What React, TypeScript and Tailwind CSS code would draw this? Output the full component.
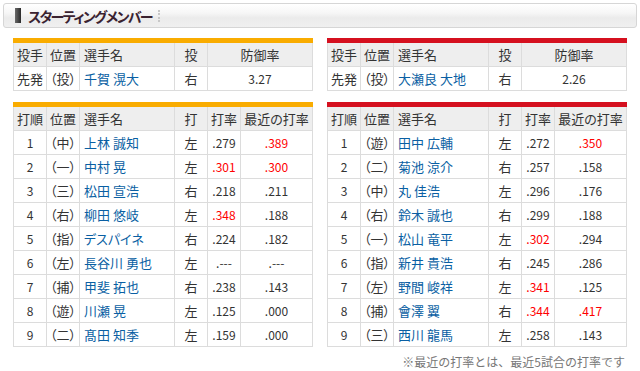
type Pitcher = { role: string; pos: string; name: string; hand: string; era: string };
type Batter = { no: number; pos: string; name: string; hand: string; avg: string; recent: string; avgHot?: boolean; recentHot?: boolean };

const teams: { color: string; pitcher: Pitcher; lineup: Batter[] }[] = [
  {
    color: '#f9ac00',
    pitcher: { role: '先発', pos: '（投）', name: '千賀 滉大', hand: '右', era: '3.27' },
    lineup: [
      { no: 1, pos: '（中）', name: '上林 誠知', hand: '左', avg: '.279', recent: '.389', recentHot: true },
      { no: 2, pos: '（一）', name: '中村 晃', hand: '左', avg: '.301', recent: '.300', avgHot: true, recentHot: true },
      { no: 3, pos: '（三）', name: '松田 宣浩', hand: '右', avg: '.218', recent: '.211' },
      { no: 4, pos: '（右）', name: '柳田 悠岐', hand: '左', avg: '.348', recent: '.188', avgHot: true },
      { no: 5, pos: '（指）', name: 'デスパイネ', hand: '右', avg: '.224', recent: '.182' },
      { no: 6, pos: '（左）', name: '長谷川 勇也', hand: '左', avg: '.---', recent: '.---' },
      { no: 7, pos: '（捕）', name: '甲斐 拓也', hand: '右', avg: '.238', recent: '.143' },
      { no: 8, pos: '（遊）', name: '川瀬 晃', hand: '左', avg: '.125', recent: '.000' },
      { no: 9, pos: '（二）', name: '髙田 知季', hand: '左', avg: '.159', recent: '.000' },
    ],
  },
  {
    color: '#d5101f',
    pitcher: { role: '先発', pos: '（投）', name: '大瀬良 大地', hand: '右', era: '2.26' },
    lineup: [
      { no: 1, pos: '（遊）', name: '田中 広輔', hand: '左', avg: '.272', recent: '.350', recentHot: true },
      { no: 2, pos: '（二）', name: '菊池 涼介', hand: '右', avg: '.257', recent: '.158' },
      { no: 3, pos: '（中）', name: '丸 佳浩', hand: '左', avg: '.296', recent: '.176' },
      { no: 4, pos: '（右）', name: '鈴木 誠也', hand: '右', avg: '.299', recent: '.188' },
      { no: 5, pos: '（一）', name: '松山 竜平', hand: '左', avg: '.302', recent: '.294', avgHot: true },
      { no: 6, pos: '（指）', name: '新井 貴浩', hand: '右', avg: '.245', recent: '.286' },
      { no: 7, pos: '（左）', name: '野間 峻祥', hand: '左', avg: '.341', recent: '.125', avgHot: true },
      { no: 8, pos: '（捕）', name: '會澤 翼', hand: '右', avg: '.344', recent: '.417', avgHot: true, recentHot: true },
      { no: 9, pos: '（三）', name: '西川 龍馬', hand: '左', avg: '.258', recent: '.143' },
    ],
  },
];

// separate borders so every row is exactly 24px (23 + 1px top line)
const th = 'border-l border-[#dcdcdc] bg-[#eeeeee] h-[23px] p-0 font-normal';
const td = 'border-l border-t border-[#dcdcdc] bg-white h-[24px] p-0';
const table = 'w-[300px] table-fixed border-separate border-spacing-0 border-r border-b border-[#dcdcdc]';
const num = 'text-[12px]';
const name = 'pl-[4px] text-[#0a5fa3] whitespace-nowrap';

export default function App() {
  return (
    <div className="w-[640px] h-[371px] bg-white text-[#333] font-['Noto_Sans_CJK_JP',sans-serif] text-[13px] [font-feature-settings:'palt'] overflow-hidden">
      {/* Section heading */}
      <div className="mx-[3px] mt-[3px] h-[25px] rounded-[3px] border border-[#d6d6d6] bg-[linear-gradient(to_bottom,#ffffff_0%,#f6f6f6_40%,#ebebeb_60%,#f0f0f0_100%)] flex items-center">
        <span className="ml-[11px] w-[6px] h-[15px] bg-[linear-gradient(to_right,#6a6a6a,#2a2a2a)]" />
        <span className="ml-[7px] text-[14px] font-bold text-[#3a2230] tracking-[-1.6px] leading-none">スターティングメンバー</span>
        <span className="ml-[6px] h-[12px] border-l-2 border-dotted border-[#c8c8c8]" />
      </div>

      <div className="flex gap-[14px] pl-[13px] mt-[10px]">
        {teams.map((team, t) => (
          <div key={t} className="w-[300px] flex flex-col">
            <div className="h-[5px]" style={{ backgroundColor: team.color }} />
            <table className={table}>
              <colgroup>
                <col className="w-[33px]" />
                <col className="w-[33px]" />
                <col className="w-[95px]" />
                <col className="w-[33px]" />
                <col />
              </colgroup>
              <thead>
                <tr>
                  <th className={`${th} text-left pl-[3px]`}>投手</th>
                  <th className={`${th} text-left pl-[3px]`}>位置</th>
                  <th className={`${th} text-left pl-[4px]`}>選手名</th>
                  <th className={`${th} text-center`}>投</th>
                  <th className={`${th} text-center`}>防御率</th>
                </tr>
              </thead>
              <tbody>
                <tr>
                  <td className={`${td} pl-[3px]`}>{team.pitcher.role}</td>
                  <td className={`${td} pl-[3px]`}>{team.pitcher.pos}</td>
                  <td className={`${td} ${name}`}>{team.pitcher.name}</td>
                  <td className={`${td} text-center`}>{team.pitcher.hand}</td>
                  <td className={`${td} ${num} text-center`}>{team.pitcher.era}</td>
                </tr>
              </tbody>
            </table>

            <div className="h-[5px] mt-[11px]" style={{ backgroundColor: team.color }} />
            <table className={table}>
              <colgroup>
                <col className="w-[33px]" />
                <col className="w-[33px]" />
                <col className="w-[95px]" />
                <col className="w-[33px]" />
                <col className="w-[33px]" />
                <col />
              </colgroup>
              <thead>
                <tr>
                  <th className={`${th} text-left pl-[3px]`}>打順</th>
                  <th className={`${th} text-left pl-[3px]`}>位置</th>
                  <th className={`${th} text-left pl-[4px]`}>選手名</th>
                  <th className={`${th} text-center`}>打</th>
                  <th className={`${th} text-center`}>打率</th>
                  <th className={`${th} text-center whitespace-nowrap`}>最近の打率</th>
                </tr>
              </thead>
              <tbody>
                {team.lineup.map((b) => (
                  <tr key={b.no}>
                    <td className={`${td} ${num} text-center`}>{b.no}</td>
                    <td className={`${td} pl-[3px]`}>{b.pos}</td>
                    <td className={`${td} ${name}`}>{b.name}</td>
                    <td className={`${td} text-center`}>{b.hand}</td>
                    <td className={`${td} ${num} text-center ${b.avgHot ? 'text-[#ff0000]' : ''}`}>{b.avg}</td>
                    <td className={`${td} ${num} text-center ${b.recentHot ? 'text-[#ff0000]' : ''}`}>{b.recent}</td>
                  </tr>
                ))}
              </tbody>
            </table>
          </div>
        ))}
      </div>

      <p className="w-[627px] text-right pr-[2px] mt-[6px] text-[12px] leading-[18px] text-[#777] [font-feature-settings:normal]">
        ※最近の打率とは、最近5試合の打率です
      </p>
    </div>
  );
}
